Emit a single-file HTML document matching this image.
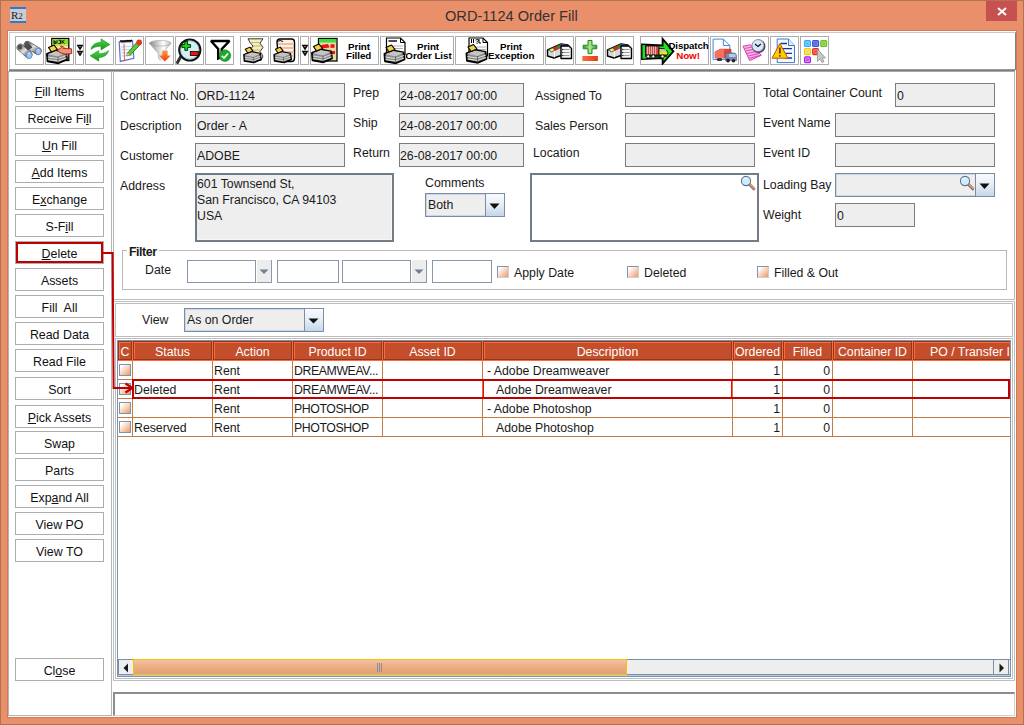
<!DOCTYPE html>
<html><head><meta charset="utf-8">
<style>
*{margin:0;padding:0;box-sizing:border-box}
html,body{width:1024px;height:725px;overflow:hidden}
body{position:relative;background:#E98F69;font-family:"Liberation Sans",sans-serif;font-size:12px;color:#111}
.a{position:absolute}
.t{position:absolute;white-space:pre;line-height:14px;font-size:12.3px;color:#1a1a1a}
.btn{position:absolute;left:15px;width:89px;height:23px;background:#fff;border:1px solid #ADADAD;text-align:center;line-height:25px;font-size:12.4px;color:#111;white-space:pre}
.fld{position:absolute;background:#EEEEEE;border:1px solid #7C7C7C;height:24px}
.tb{position:absolute;top:36px;height:29px;border:1px solid #ADADAD;background:#fff}
u{text-decoration:underline;text-underline-offset:1px}
.cb{position:absolute;width:12px;height:12px;border-top:1px solid #8094AA;border-left:1px solid #8094AA;border-right:1px solid #C8D0DA;border-bottom:1px solid #C8D0DA;background:linear-gradient(135deg,#fff 15%,#EE9A62 100%)}
.hc{position:absolute;top:0;height:19px;background:#C44D2B;border:1px solid #8B3A1F;box-shadow:inset 1px 1px 0 #FF6B3A;color:#fff;text-align:center;line-height:20px;font-size:12.3px;white-space:pre;overflow:hidden}
.tbt{position:absolute;font-weight:bold;font-size:9.8px;letter-spacing:-0.05px;line-height:11px;white-space:pre;text-align:center;color:#000}
</style></head><body>
<!-- window frame -->
<div class="a" style="left:0;top:0;width:1024px;height:725px;border:1px solid #B2714F"></div>
<!-- title icon -->
<div class="a" style="left:10px;top:7px;width:16px;height:16px;background:#C8CCD4;border-top:2px solid #2A7AD0;border-bottom:2px solid #2A7AD0"></div>
<div class="t" style="left:11px;top:8px;font-family:'Liberation Serif';font-size:11px;color:#222">R<span style="font-size:9px">2</span></div>
<div class="t" style="left:445px;top:6px;font-size:14.6px;line-height:20px;color:#333">ORD-1124 Order Fill</div>
<!-- close -->
<div class="a" style="left:986px;top:1px;width:31px;height:20px;background:#C75050"></div>
<svg class="a" style="left:997px;top:7px" width="10" height="9"><path d="M1 1L9 8M9 1L1 8" stroke="#fff" stroke-width="1.9"/></svg>

<!-- client -->
<div class="a" style="left:7px;top:30px;width:1010px;height:688px;background:#D07A55"></div>
<div class="a" style="left:8px;top:31px;width:1008px;height:686px;background:#fff"></div>
<!-- toolbar -->
<div class="a" style="left:9px;top:32px;width:1007px;height:38px;border:1px solid #C8C8C8;border-bottom:none;border-right:1px solid #7E8288"></div>
<div class="a" style="left:9px;top:69px;width:1006px;height:1px;background:#9A9A9A"></div>
<div class="a" style="left:9px;top:70px;width:1006px;height:1px;background:#7A7A7A"></div>
<div class="a" style="left:9px;top:71px;width:1006px;height:1px;background:#A8A8A8"></div>

<!-- TOOLBAR -->
<svg width="0" height="0" style="position:absolute"><defs>
<linearGradient id="gGray" x1="0" y1="0" x2="0" y2="1"><stop offset="0" stop-color="#F0F0F0"/><stop offset="1" stop-color="#8A8A8A"/></linearGradient>
<linearGradient id="gGray2" x1="0" y1="0" x2="1" y2="1"><stop offset="0" stop-color="#9A9A9A"/><stop offset=".5" stop-color="#E8E8E8"/><stop offset="1" stop-color="#6A6A6A"/></linearGradient>
<linearGradient id="gBin" x1="0" y1="0" x2="1" y2="1"><stop offset="0" stop-color="#8A8A8A"/><stop offset=".45" stop-color="#E4E4E4"/><stop offset="1" stop-color="#707070"/></linearGradient>
<linearGradient id="gGreen" x1="0" y1="0" x2="0" y2="1"><stop offset="0" stop-color="#4FD04F"/><stop offset="1" stop-color="#159A15"/></linearGradient>
<linearGradient id="gFun" x1="0" y1="0" x2="1" y2="0"><stop offset="0" stop-color="#888"/><stop offset=".65" stop-color="#FFFFFF"/><stop offset="1" stop-color="#B8B8B8"/></linearGradient>
<linearGradient id="gOr" x1="0" y1="0" x2="0" y2="1"><stop offset="0" stop-color="#F8A040"/><stop offset="1" stop-color="#F03A10"/></linearGradient>
<linearGradient id="gPlus" x1="0" y1="0" x2="1" y2="0"><stop offset="0" stop-color="#2A9A2A"/><stop offset=".5" stop-color="#B0E890"/><stop offset="1" stop-color="#2A9A2A"/></linearGradient>
<linearGradient id="gMin" x1="0" y1="0" x2="1" y2="0"><stop offset="0" stop-color="#F87040"/><stop offset="1" stop-color="#E83A10"/></linearGradient>
<g id="printer">
 <path d="M1.5 17 L10 13.5 L20.5 15.5 L21.5 22.5 L13 26.2 L2 24.2 Z" fill="#8C8C8C" stroke="#000" stroke-width="1.9" stroke-linejoin="round"/>
 <path d="M2 17.2 L10 14 L20.5 15.8 L12.5 19.5 Z" fill="#C4C4C4"/>
 <path d="M2.3 20 L12.5 21.5 L21 18.5 M2.5 22.5 L12.8 24 L21 21" fill="none" stroke="#E8E8E8" stroke-width=".9"/>
 <path d="M12.5 19.5 V25.8" stroke="#555" stroke-width=".8"/>
 <path d="M3 10.5 L8.5 8 L12 12.5 L6 15 Z" fill="#F8D040" stroke="#000" stroke-width="1.2" stroke-linejoin="round"/>
</g>
<g id="boxdoc">
 <path d="M2.5 14 L16 8 L23 9 L23 17 L9 22 L2.5 20 Z" fill="#D8D8D8" stroke="#000" stroke-width="1.4" stroke-linejoin="round"/>
 <path d="M2.5 14 L16 8 L23 9 L9.5 15 Z" fill="#666"/>
 <path d="M4 13.5 L8 11.8 L10 14.5 L6 16 Z" fill="#F0F060" stroke="#222" stroke-width=".6"/>
 <path d="M8.5 11.5 L12 10 L13.5 12.8 L10 14.2 Z" fill="#E02020"/>
 <path d="M12.5 9.8 L15 8.8 L16.5 11 L13.8 12 Z" fill="#10A010"/>
 <path d="M15.5 8.6 L19 8.2 L20.5 10 L17 10.8 Z" fill="#2030E0"/>
 <path d="M9.5 15 V21.5" stroke="#fff" stroke-width=".8"/>
 <path d="M16 10 H24 L26.5 12.5 V22.5 H16 Z" fill="#F4F4F4" stroke="#000" stroke-width="1.4" stroke-linejoin="round"/>
 <path d="M18 13.5 H24.5 M18 16.5 H24.5 M18 19.5 H24.5" stroke="#888" stroke-width=".8"/>
 <circle cx="17.6" cy="13.5" r=".8" fill="#333"/><circle cx="17.6" cy="16.5" r=".8" fill="#333"/><circle cx="17.6" cy="19.5" r=".8" fill="#333"/>
</g>
<g id="dd"><path d="M2 9 H8 L5 14 Z M2 15 H8 L5 20 Z" fill="#000" stroke="#000" stroke-width=".5" stroke-linejoin="round"/><circle cx="5" cy="10.6" r=".7" fill="#ddd"/><circle cx="5" cy="16.6" r=".7" fill="#ddd"/></g>
</defs></svg>
<div class="tb" style="left:15px;width:29px"></div>
<div class="tb" style="left:45px;width:29px"></div>
<div class="tb" style="left:75px;width:9px"></div>
<div class="tb" style="left:85px;width:29px"></div>
<div class="tb" style="left:115px;width:29px"></div>
<div class="tb" style="left:145px;width:29px"></div>
<div class="tb" style="left:175px;width:29px"></div>
<div class="tb" style="left:205px;width:29px"></div>
<div class="tb" style="left:240px;width:29px"></div>
<div class="tb" style="left:270px;width:29px"></div>
<div class="tb" style="left:300px;width:9px"></div>
<div class="tb" style="left:310px;width:69px"></div>
<div class="tb" style="left:380px;width:74px"></div>
<div class="tb" style="left:455px;width:89px"></div>
<div class="tb" style="left:545px;width:29px"></div>
<div class="tb" style="left:575px;width:29px"></div>
<div class="tb" style="left:605px;width:29px"></div>
<div class="tb" style="left:640px;width:69px"></div>
<div class="tb" style="left:710px;width:29px"></div>
<div class="tb" style="left:740px;width:29px"></div>
<div class="tb" style="left:770px;width:29px"></div>
<div class="tb" style="left:800px;width:29px"></div>
<svg class="a" style="left:15px;top:36px" width="29" height="29" viewBox="0 0 29 29">
<path d="M5.5 11.5 L13.5 18.5" stroke="#5A5A5A" stroke-width="7.6" stroke-linecap="round"/>
<path d="M5.5 11.5 L13.5 18.5" stroke="url(#gBin)" stroke-width="6.4" stroke-linecap="round"/>
<path d="M12.5 8.8 L22.8 15" stroke="#5A5A5A" stroke-width="7.6" stroke-linecap="round"/>
<path d="M12.5 8.8 L22.8 15" stroke="url(#gBin)" stroke-width="6.4" stroke-linecap="round"/>
<path d="M9 10 L14 7.5 L17.5 11.5 L13 14.5 Z" fill="#4A4A4A"/>
<ellipse cx="5" cy="11" rx="2.2" ry="2.6" fill="#505050"/>
<ellipse cx="12" cy="8.3" rx="2.2" ry="2.6" fill="#505050"/>
<ellipse cx="14.2" cy="19.2" rx="2.9" ry="3.4" fill="#9CC4F4" stroke="#5A7AB0" stroke-width=".7"/>
<ellipse cx="23.4" cy="15.6" rx="2.7" ry="3.2" fill="#9CC4F4" stroke="#5A7AB0" stroke-width=".7"/>
<path d="M12.8 18 Q13.5 16.8 14.8 17" fill="none" stroke="#fff" stroke-width=".8"/>
<path d="M22 14.5 Q22.7 13.3 24 13.5" fill="none" stroke="#fff" stroke-width=".8"/>
</svg>
<svg class="a" style="left:45px;top:36px" width="29" height="29" viewBox="0 0 29 29">
<rect x="6.8" y="2.5" width="17" height="22" fill="#F8EC98" stroke="#000" stroke-width="1.3"/>
<rect x="7.5" y="3.2" width="15.6" height="5.3" fill="#8CDC30"/>
<path d="M9 4.2 V7.6 H10.8 V5.8 H9 M12 4.2 V7.6 M13.5 4.2 H15.5 V7.6 H13.5 M17 4.2 V7.6 M17 6 L19.5 4.2 M17.5 5.6 L19.5 7.6" fill="none" stroke="#000" stroke-width=".9"/>
<path d="M7.5 9.6 H23" stroke="#D8C860" stroke-width="1"/>
<g transform="translate(0.5,1)"> <path d="M1.5 17 L10 13.5 L20.5 15.5 L21.5 22.5 L13 26.2 L2 24.2 Z" fill="#8C8C8C" stroke="#000" stroke-width="1.9" stroke-linejoin="round"/> <path d="M2 17.2 L10 14 L20.5 15.8 L12.5 19.5 Z" fill="#C4C4C4"/> <path d="M2.3 20 L12.5 21.5 L21 18.5 M2.5 22.5 L12.8 24 L21 21" fill="none" stroke="#E8E8E8" stroke-width=".9"/> <path d="M12.5 19.5 V25.8" stroke="#555" stroke-width=".8"/> <path d="M3 10.5 L8.5 8 L12 12.5 L6 15 Z" fill="#F8D040" stroke="#000" stroke-width="1.2" stroke-linejoin="round"/></g>
<path d="M12.5 14 L16.5 11.5 L19 12.5 L26.5 12.8 L26.8 17.5 L20 18.2 L14.5 16.5 Z" fill="#F4907A" stroke="#9A2010" stroke-width=".9"/>
<path d="M16.5 11.5 Q15 10.5 16 9.8 L19.5 11.5" fill="#F4907A" stroke="#9A2010" stroke-width=".8"/>
</svg>
<svg class="a" style="left:75px;top:36px" width="9" height="29" viewBox="0 0 9 29"><g><path d="M2 9 H8 L5 14 Z M2 15 H8 L5 20 Z" fill="#000" stroke="#000" stroke-width=".5" stroke-linejoin="round"/><circle cx="5" cy="10.6" r=".7" fill="#ddd"/><circle cx="5" cy="16.6" r=".7" fill="#ddd"/></g></svg>
<svg class="a" style="left:85px;top:36px" width="29" height="29" viewBox="0 0 29 29">
<path d="M6 13.5 C6.5 9 11 6.3 16 6.3 L16 2.8 L25 8.5 L16 14 L16 10.3 C12 10.3 8.5 11.5 6 13.5 Z" fill="url(#gGreen)" stroke="#1A8A1A" stroke-width=".5"/>
<path d="M23.5 14.5 C23 19 18.5 21.6 13.8 21.6 L13.8 25.2 L5 19.8 L13.8 14.5 L13.8 17.8 C17.5 17.8 21.3 16.6 23.5 14.5 Z" fill="url(#gGreen)" stroke="#1A8A1A" stroke-width=".5"/>
</svg>
<svg class="a" style="left:115px;top:36px" width="29" height="29" viewBox="0 0 29 29">
<path d="M4.2 6 L17.5 5 L18.9 22.3 L5.3 25.4 Z" fill="#F8FAFF" stroke="#6A6AC8" stroke-width="1.2"/>
<path d="M6 11 L17.6 10.2 M6.3 14 L17.9 13.2 M6.6 17 L18.2 16.2 M6.9 20 L18.5 19.2" stroke="#A8C8F0" stroke-width=".8"/>
<path d="M9 8 L9.6 24.5" stroke="#F05030" stroke-width=".9"/>
<path d="M5 5.8 Q6 3.5 7 5.8 Q8 3.5 9 5.8 Q10 3.5 11 5.6 Q12 3.3 13 5.5 Q14 3.3 15 5.4 Q16 3.2 17 5.3" fill="none" stroke="#000" stroke-width="1.3"/>
<path d="M11.8 19.8 L12.6 17 L22.5 5.5 L25.5 8.2 L15.2 19.2 Z" fill="#5CC83A" stroke="#2A7A1A" stroke-width=".9"/>
<path d="M11.8 19.8 L12.6 17 L15.2 19.2 Z" fill="#E0C090"/>
<circle cx="24.2" cy="6.4" r="2.8" fill="#E83A1A"/>
</svg>
<svg class="a" style="left:145px;top:36px" width="29" height="29" viewBox="0 0 29 29">
<path d="M4.4 7.2 Q9 13 13 17 L13.8 23 Q15 25.5 16.5 23 L17 17 Q22 13 26 7.2 Z" fill="url(#gFun)" stroke="#A8A8A8" stroke-width=".6"/>
<ellipse cx="15.2" cy="7.2" rx="10.8" ry="2.8" fill="url(#gFun)" stroke="#A0A0A0" stroke-width=".6"/>
<path d="M17.3 14.5 H22.6 V19.5 H25.8 L19.9 25.6 L14 19.5 H17.3 Z" fill="url(#gOr)"/>
</svg>
<svg class="a" style="left:175px;top:36px" width="29" height="29" viewBox="0 0 29 29">
<path d="M5.5 21 L2.5 26.5" stroke="#333" stroke-width="3" stroke-linecap="round"/>
<circle cx="14.8" cy="14" r="10.5" fill="#D0F2F6" stroke="#111" stroke-width="2.2"/>
<circle cx="14.8" cy="14" r="9.2" fill="none" stroke="#9AA" stroke-width=".8"/>
<path d="M6.8 8.6 H9.8 V5.6 H12.6 V8.6 H15.6 V11.4 H12.6 V14.4 H9.8 V11.4 H6.8 Z" fill="#10E010" stroke="#000" stroke-width=".8"/>
<rect x="15.3" y="15.5" width="8" height="4" fill="#F01010" stroke="#000" stroke-width=".8"/>
</svg>
<svg class="a" style="left:205px;top:36px" width="29" height="29" viewBox="0 0 29 29">
<path d="M6 5 H24.5 L16.8 13 V21 L13.2 22.5 V13 Z" fill="#fff" stroke="#000" stroke-width="2.4" stroke-linejoin="miter" stroke-miterlimit="2"/>
<circle cx="19.9" cy="19.6" r="5.8" fill="#1EA82A" stroke="#148020" stroke-width=".6"/>
<path d="M16.8 19.8 L19 22 L23 17.5" fill="none" stroke="#fff" stroke-width="1.8"/>
</svg>
<svg class="a" style="left:240px;top:36px" width="29" height="29" viewBox="0 0 29 29">
<path d="M8 2.8 H23 L20 7.2 L23 11.5 L20 15.5 L23 20 L21 24.5 L11 22 L13 18 L10 14 L13 10 L10 6.5 Z" fill="#F4F0B8" stroke="#222" stroke-width=".9"/>
<path d="M10 6.5 H20 M13 10 H23 M10 14 H20 M13 18 H23" stroke="#A8A060" stroke-width=".7"/>
<g transform="translate(2.7,4.3) scale(0.85)"> <path d="M1.5 17 L10 13.5 L20.5 15.5 L21.5 22.5 L13 26.2 L2 24.2 Z" fill="#8C8C8C" stroke="#000" stroke-width="1.9" stroke-linejoin="round"/> <path d="M2 17.2 L10 14 L20.5 15.8 L12.5 19.5 Z" fill="#C4C4C4"/> <path d="M2.3 20 L12.5 21.5 L21 18.5 M2.5 22.5 L12.8 24 L21 21" fill="none" stroke="#E8E8E8" stroke-width=".9"/> <path d="M12.5 19.5 V25.8" stroke="#555" stroke-width=".8"/> <path d="M3 10.5 L8.5 8 L12 12.5 L6 15 Z" fill="#F8D040" stroke="#000" stroke-width="1.2" stroke-linejoin="round"/></g>
</svg>
<svg class="a" style="left:270px;top:36px" width="29" height="29" viewBox="0 0 29 29">
<path d="M7 6 Q7 3 10 3 H21.5 Q24.5 3 24.5 6.5 V22 Q24.5 25.5 21.5 25.5 H12 L8 19 Z" fill="#FAF0E8" stroke="#000" stroke-width="1.4"/>
<path d="M7.5 5.5 Q10 3.5 13 5.5" fill="none" stroke="#000" stroke-width="1"/>
<path d="M8 8 H24 M8.5 12 H24 M9 16 H24 M9.5 20 H24" stroke="#EEC0A0" stroke-width="1.8"/>
<g transform="translate(2.9,4.3) scale(0.85)"> <path d="M1.5 17 L10 13.5 L20.5 15.5 L21.5 22.5 L13 26.2 L2 24.2 Z" fill="#8C8C8C" stroke="#000" stroke-width="1.9" stroke-linejoin="round"/> <path d="M2 17.2 L10 14 L20.5 15.8 L12.5 19.5 Z" fill="#C4C4C4"/> <path d="M2.3 20 L12.5 21.5 L21 18.5 M2.5 22.5 L12.8 24 L21 21" fill="none" stroke="#E8E8E8" stroke-width=".9"/> <path d="M12.5 19.5 V25.8" stroke="#555" stroke-width=".8"/> <path d="M3 10.5 L8.5 8 L12 12.5 L6 15 Z" fill="#F8D040" stroke="#000" stroke-width="1.2" stroke-linejoin="round"/></g>
</svg>
<svg class="a" style="left:300px;top:36px" width="9" height="29" viewBox="0 0 9 29"><g><path d="M2 9 H8 L5 14 Z M2 15 H8 L5 20 Z" fill="#000" stroke="#000" stroke-width=".5" stroke-linejoin="round"/><circle cx="5" cy="10.6" r=".7" fill="#ddd"/><circle cx="5" cy="16.6" r=".7" fill="#ddd"/></g></svg>
<svg class="a" style="left:310px;top:36px" width="69" height="29" viewBox="0 0 69 29">
<rect x="8.5" y="2.5" width="18.5" height="22.5" fill="#E4DCA8" stroke="#000" stroke-width="1.3"/>
<rect x="9" y="3" width="17.2" height="3.5" fill="#3AE03A"/>
<path d="M11 9 L18 8 L19.5 11.5 L12 12.5 Z" fill="#F01010"/>
<rect x="20.5" y="8.3" width="4" height="3.5" fill="#F01010"/>
<rect x="22" y="15" width="3" height="3" fill="#F01010"/>
<g transform="translate(0.5,0)"> <path d="M1.5 17 L10 13.5 L20.5 15.5 L21.5 22.5 L13 26.2 L2 24.2 Z" fill="#8C8C8C" stroke="#000" stroke-width="1.9" stroke-linejoin="round"/> <path d="M2 17.2 L10 14 L20.5 15.8 L12.5 19.5 Z" fill="#C4C4C4"/> <path d="M2.3 20 L12.5 21.5 L21 18.5 M2.5 22.5 L12.8 24 L21 21" fill="none" stroke="#E8E8E8" stroke-width=".9"/> <path d="M12.5 19.5 V25.8" stroke="#555" stroke-width=".8"/> <path d="M3 10.5 L8.5 8 L12 12.5 L6 15 Z" fill="#F8D040" stroke="#000" stroke-width="1.2" stroke-linejoin="round"/></g>
</svg>
<svg class="a" style="left:380px;top:36px" width="74" height="29" viewBox="0 0 74 29">
<path d="M6.5 2 H20.5 L25 6.5 V18.5 H6.5 Z" fill="#fff" stroke="#000" stroke-width="1.2"/>
<path d="M20.5 2 V6.5 H25" fill="none" stroke="#000" stroke-width="1"/>
<path d="M8.5 5 H17" stroke="#000" stroke-width="1.4"/>
<path d="M9 10 H23 M9 12.5 H23" stroke="#999" stroke-width=".8"/>
<g transform="translate(3,1)"> <path d="M1.5 17 L10 13.5 L20.5 15.5 L21.5 22.5 L13 26.2 L2 24.2 Z" fill="#8C8C8C" stroke="#000" stroke-width="1.9" stroke-linejoin="round"/> <path d="M2 17.2 L10 14 L20.5 15.8 L12.5 19.5 Z" fill="#C4C4C4"/> <path d="M2.3 20 L12.5 21.5 L21 18.5 M2.5 22.5 L12.8 24 L21 21" fill="none" stroke="#E8E8E8" stroke-width=".9"/> <path d="M12.5 19.5 V25.8" stroke="#555" stroke-width=".8"/> <path d="M3 10.5 L8.5 8 L12 12.5 L6 15 Z" fill="#F8D040" stroke="#000" stroke-width="1.2" stroke-linejoin="round"/></g>
</svg>
<svg class="a" style="left:455px;top:36px" width="89" height="29" viewBox="0 0 89 29">
<path d="M14 2 H28 L32.5 6.5 V20 H14 Z" fill="#fff" stroke="#000" stroke-width="1.2"/>
<path d="M28 2 V6.5 H32.5" fill="none" stroke="#000" stroke-width="1"/>
<path d="M16.5 3 V7 M18.5 3 V7" stroke="#000" stroke-width="1"/>
<text x="20" y="8.2" font-family="Liberation Sans" font-weight="bold" font-size="7" fill="#000">?</text>
<path d="M24 3 V7 H26" fill="none" stroke="#000" stroke-width="1"/>
<path d="M17 11 H31 M17 13.5 H31" stroke="#999" stroke-width=".8"/>
<g transform="translate(10,0.5)"> <path d="M1.5 17 L10 13.5 L20.5 15.5 L21.5 22.5 L13 26.2 L2 24.2 Z" fill="#8C8C8C" stroke="#000" stroke-width="1.9" stroke-linejoin="round"/> <path d="M2 17.2 L10 14 L20.5 15.8 L12.5 19.5 Z" fill="#C4C4C4"/> <path d="M2.3 20 L12.5 21.5 L21 18.5 M2.5 22.5 L12.8 24 L21 21" fill="none" stroke="#E8E8E8" stroke-width=".9"/> <path d="M12.5 19.5 V25.8" stroke="#555" stroke-width=".8"/> <path d="M3 10.5 L8.5 8 L12 12.5 L6 15 Z" fill="#F8D040" stroke="#000" stroke-width="1.2" stroke-linejoin="round"/></g>
</svg>
<svg class="a" style="left:545px;top:36px" width="29" height="29" viewBox="0 0 29 29"><g> <path d="M2.5 14 L16 8 L23 9 L23 17 L9 22 L2.5 20 Z" fill="#D8D8D8" stroke="#000" stroke-width="1.4" stroke-linejoin="round"/> <path d="M2.5 14 L16 8 L23 9 L9.5 15 Z" fill="#666"/> <path d="M4 13.5 L8 11.8 L10 14.5 L6 16 Z" fill="#F0F060" stroke="#222" stroke-width=".6"/> <path d="M8.5 11.5 L12 10 L13.5 12.8 L10 14.2 Z" fill="#E02020"/> <path d="M12.5 9.8 L15 8.8 L16.5 11 L13.8 12 Z" fill="#10A010"/> <path d="M15.5 8.6 L19 8.2 L20.5 10 L17 10.8 Z" fill="#2030E0"/> <path d="M9.5 15 V21.5" stroke="#fff" stroke-width=".8"/> <path d="M16 10 H24 L26.5 12.5 V22.5 H16 Z" fill="#F4F4F4" stroke="#000" stroke-width="1.4" stroke-linejoin="round"/> <path d="M18 13.5 H24.5 M18 16.5 H24.5 M18 19.5 H24.5" stroke="#888" stroke-width=".8"/> <circle cx="17.6" cy="13.5" r=".8" fill="#333"/><circle cx="17.6" cy="16.5" r=".8" fill="#333"/><circle cx="17.6" cy="19.5" r=".8" fill="#333"/></g></svg>
<svg class="a" style="left:575px;top:36px" width="29" height="29" viewBox="0 0 29 29">
<path d="M13 4.5 H17 V9.2 H21.8 V12.8 H17 V17.6 H13 V12.8 H8.2 V9.2 H13 Z" fill="url(#gPlus)" stroke="#238A23" stroke-width="1"/>
<rect x="7.3" y="20" width="15.6" height="5" fill="url(#gMin)"/>
</svg>
<svg class="a" style="left:605px;top:36px" width="29" height="29" viewBox="0 0 29 29"><g> <path d="M2.5 14 L16 8 L23 9 L23 17 L9 22 L2.5 20 Z" fill="#D8D8D8" stroke="#000" stroke-width="1.4" stroke-linejoin="round"/> <path d="M2.5 14 L16 8 L23 9 L9.5 15 Z" fill="#666"/> <path d="M4 13.5 L8 11.8 L10 14.5 L6 16 Z" fill="#F0F060" stroke="#222" stroke-width=".6"/> <path d="M8.5 11.5 L12 10 L13.5 12.8 L10 14.2 Z" fill="#E02020"/> <path d="M12.5 9.8 L15 8.8 L16.5 11 L13.8 12 Z" fill="#10A010"/> <path d="M15.5 8.6 L19 8.2 L20.5 10 L17 10.8 Z" fill="#2030E0"/> <path d="M9.5 15 V21.5" stroke="#fff" stroke-width=".8"/> <path d="M16 10 H24 L26.5 12.5 V22.5 H16 Z" fill="#F4F4F4" stroke="#000" stroke-width="1.4" stroke-linejoin="round"/> <path d="M18 13.5 H24.5 M18 16.5 H24.5 M18 19.5 H24.5" stroke="#888" stroke-width=".8"/> <circle cx="17.6" cy="13.5" r=".8" fill="#333"/><circle cx="17.6" cy="16.5" r=".8" fill="#333"/><circle cx="17.6" cy="19.5" r=".8" fill="#333"/></g></svg>
<svg class="a" style="left:640px;top:36px" width="69" height="29" viewBox="0 0 69 29">
<path d="M2 8.5 L22.6 9.5 V3 L33.4 15.3 L22.6 27.6 V22 L2 23 Z" fill="#22E022" stroke="#000" stroke-width="1.8" stroke-linejoin="miter"/>
<path d="M2.5 9 L6 9.5 V22.5 L2.5 22.8 Z" fill="#22E022"/>
<rect x="5.5" y="10" width="13.5" height="9" fill="#C85050" stroke="#000" stroke-width=".8"/>
<path d="M7.5 10.5 V18.5 M9.5 10.5 V18.5 M11.5 10.5 V18.5 M13.5 10.5 V18.5 M15.5 10.5 V18.5" stroke="#E8C8C8" stroke-width=".8"/>
<path d="M19 12.5 H24 L28 16 L27.5 19 H19 Z" fill="#F0E020" stroke="#000" stroke-width=".8"/>
<rect x="20.5" y="13.2" width="2.5" height="2" fill="#70D0F0"/><rect x="23.5" y="13.2" width="2.5" height="2" fill="#70D0F0"/>
<path d="M5 20 H27" stroke="#000" stroke-width="1.4"/>
<circle cx="8.2" cy="20.4" r="1.6" fill="#fff" stroke="#000" stroke-width=".8"/><circle cx="13.2" cy="20.4" r="1.6" fill="#fff" stroke="#000" stroke-width=".8"/><circle cx="22.5" cy="20.4" r="1.6" fill="#fff" stroke="#000" stroke-width=".8"/>
</svg>
<svg class="a" style="left:710px;top:36px" width="29" height="29" viewBox="0 0 29 29">
<path d="M3.1 3.1 H13.4 L19.8 9.5 V23.4 H3.1 Z" fill="#fff" stroke="#3A8AE0" stroke-width="1"/>
<path d="M13.4 3.1 V9.5 H19.8" fill="none" stroke="#3A8AE0" stroke-width="1"/>
<path d="M5 16 L10 13.2 H21 V22 H5 Z" fill="#EE4030" stroke="#B02010" stroke-width=".6"/>
<path d="M5 16 L10 13.2 H14 V22 H5 Z" fill="#F87060"/>
<path d="M15.5 17 H24 Q26.5 17 26.5 20 V24.5 H15.5 Z" fill="#8088B0" stroke="#505880" stroke-width=".6"/>
<rect x="19" y="18" width="6.5" height="3" fill="#A8D0F0"/>
<ellipse cx="8.5" cy="23.5" rx="1.8" ry="1.6" fill="#333"/><ellipse cx="10.5" cy="23.5" rx="1.8" ry="1.6" fill="#333"/>
<circle cx="18" cy="24.5" r="1.9" fill="#222"/><circle cx="23.5" cy="24.8" r="1.8" fill="#222"/>
</svg>
<svg class="a" style="left:740px;top:36px" width="29" height="29" viewBox="0 0 29 29">
<path d="M3 10.2 L10.5 8.8 L21.3 19.2 L9.8 24.6 Z" fill="#F8B8E8" stroke="#D040B0" stroke-width="1"/>
<path d="M4.5 12.5 L12 11 M5.8 15 L14.3 13.2 M7 17.5 L16.5 15.5 M8.2 20 L18.8 17.6 M9.4 22.4 L20.5 19.4" stroke="#E050C0" stroke-width="1.2"/>
<circle cx="18.6" cy="10.2" r="6.8" fill="#3A3A4A"/>
<circle cx="18" cy="9.6" r="6" fill="#D8E8F8" stroke="#8A7AA8" stroke-width=".8"/>
<path d="M15 8 L18 10.5 L20.8 8" fill="none" stroke="#111" stroke-width="1.1"/>
</svg>
<svg class="a" style="left:770px;top:36px" width="29" height="29" viewBox="0 0 29 29">
<path d="M7.2 3 H18.5 L24.5 9.5 V26.6 H7.2 Z" fill="#F4F8FF" stroke="#3A7AD0" stroke-width="1"/>
<path d="M18.5 3 V9.5 H24.5" fill="#E0EAF8" stroke="#3A7AD0" stroke-width="1"/>
<path d="M10.5 7.5 H17 M13 12.6 H22 M14 17.3 H22 M15 22 H22" stroke="#1838A0" stroke-width="1.3"/>
<path d="M9.9 7.6 L18 22.2 H2 Z" fill="#F8D000" stroke="#C05000" stroke-width="1" stroke-linejoin="round"/>
<path d="M9.9 11.5 V17.5" stroke="#702000" stroke-width="1.6"/>
<circle cx="9.9" cy="19.8" r=".9" fill="#702000"/>
</svg>
<svg class="a" style="left:800px;top:36px" width="29" height="29" viewBox="0 0 29 29"><rect x="4.6" y="4.6" width="5.8" height="5.8" rx="1" fill="#90D8FF" stroke="#30A8F8" stroke-width="1.3"/><rect x="6.2" y="6.2" width="2.6" height="2.6" fill="#50B8F8"/><rect x="12.7" y="4.6" width="5.8" height="5.8" rx="1" fill="#8090E8" stroke="#3850D8" stroke-width="1.3"/><rect x="14.3" y="6.2" width="2.6" height="2.6" fill="#5068D8"/><rect x="20.8" y="4.6" width="5.8" height="5.8" rx="1" fill="#B0E070" stroke="#68C020" stroke-width="1.3"/><rect x="22.4" y="6.2" width="2.6" height="2.6" fill="#80C840"/><rect x="4.6" y="12.7" width="5.8" height="5.8" rx="1" fill="#FFEC98" stroke="#F8C800" stroke-width="1.3"/><rect x="6.2" y="14.3" width="2.6" height="2.6" fill="#F8D850"/><rect x="12.7" y="12.7" width="5.8" height="5.8" rx="1" fill="#F88070" stroke="#E03020" stroke-width="1.3"/><rect x="14.3" y="14.3" width="2.6" height="2.6" fill="#E85040"/><rect x="4.6" y="20.8" width="5.8" height="5.8" rx="1" fill="#D890F8" stroke="#B020E8" stroke-width="1.3"/><rect x="6.2" y="22.4" width="2.6" height="2.6" fill="#B850F0"/>
<path d="M17.4 13 V25.5 L20 23 L22 26.5 L24 25.5 L22 22 H25.5 Z" fill="#C8C8C8" stroke="#909090" stroke-width=".8"/>
</svg>
<div class="tbt" style="left:347px;top:41px;width:24px">Print</div>
<div class="tbt" style="left:346px;top:50px;width:25px">Filled</div>
<div class="tbt" style="left:417px;top:41px;width:22px">Print</div>
<div class="tbt" style="left:405px;top:50px;width:47px">Order List</div>
<div class="tbt" style="left:500px;top:41px;width:22px">Print</div>
<div class="tbt" style="left:488px;top:50px;width:46px">Exception</div>
<div class="tbt" style="left:668px;top:40px;width:41px;font-size:9.7px;letter-spacing:-0.1px">Dispatch</div>
<div class="tbt" style="left:676px;top:50px;width:24px;color:#F00000">Now!</div>
<!-- /TOOLBAR -->
<!-- left panel -->
<div class="a" style="left:8px;top:71px;width:104px;height:645px;border:1px solid #B4B4B4;border-top:none"></div>
<div class="btn" style="top:79px"><u>F</u>ill Items</div>
<div class="btn" style="top:106px">Receive Fi<u>l</u>l</div>
<div class="btn" style="top:133px"><u>U</u>n Fill</div>
<div class="btn" style="top:160px"><u>A</u>dd Items</div>
<div class="btn" style="top:187px">E<u>x</u>change</div>
<div class="btn" style="top:214px">S-F<u>i</u>ll</div>
<div class="btn" style="top:241px"><u>D</u>elete</div>
<div class="btn" style="top:268px">Assets</div>
<div class="btn" style="top:295px">Fill  All</div>
<div class="btn" style="top:322px">Read Data</div>
<div class="btn" style="top:349px">Read File</div>
<div class="btn" style="top:377px">Sort</div>
<div class="btn" style="top:405px"><u>P</u>ick Assets</div>
<div class="btn" style="top:431px">Swap</div>
<div class="btn" style="top:458px">Parts</div>
<div class="btn" style="top:485px">Exp<u>a</u>nd All</div>
<div class="btn" style="top:512px">View PO</div>
<div class="btn" style="top:539px">View TO</div>
<div class="btn" style="top:658px">Cl<u>o</u>se</div>

<!-- main panel -->
<div class="a" style="left:113px;top:71px;width:902px;height:229px;border-left:1px solid #B4B4B4;border-right:1px solid #B4B4B4"></div>


<div class="t" style="left:120px;top:89px">Contract No.</div>
<div class="t" style="left:120px;top:119px">Description</div>
<div class="t" style="left:120px;top:149px">Customer</div>
<div class="t" style="left:120px;top:179px">Address</div>
<div class="fld" style="left:195px;top:83px;width:150px"></div>
<div class="t" style="left:197px;top:89px">ORD-1124</div>
<div class="fld" style="left:195px;top:113px;width:150px"></div>
<div class="t" style="left:197px;top:119px">Order - A</div>
<div class="fld" style="left:195px;top:143px;width:150px"></div>
<div class="t" style="left:197px;top:149px">ADOBE</div>
<div class="a" style="left:195px;top:173px;width:199px;height:69px;background:#EEEEEE;border:2px solid #6C7C8C;border-right-width:1px;border-bottom-width:1px;box-shadow:inset -1px -1px 0 #7C7C7C,inset -2px -2px 0 #F6F6F6"></div>
<div class="t" style="left:197px;top:176px;line-height:16px">601 Townsend St,
San Francisco, CA 94103
USA</div>

<div class="t" style="left:353px;top:86px">Prep</div>
<div class="t" style="left:353px;top:116px">Ship</div>
<div class="t" style="left:353px;top:146px">Return</div>
<div class="fld" style="left:399px;top:83px;width:125px"></div>
<div class="t" style="left:400px;top:89px">24-08-2017 00:00</div>
<div class="fld" style="left:399px;top:113px;width:125px"></div>
<div class="t" style="left:400px;top:119px">24-08-2017 00:00</div>
<div class="fld" style="left:399px;top:143px;width:125px"></div>
<div class="t" style="left:400px;top:149px">26-08-2017 00:00</div>

<div class="t" style="left:425px;top:176px">Comments</div>
<div class="a" style="left:425px;top:193px;width:80px;height:24px;background:#EEEEEE;border:1px solid #7A8CA4;box-shadow:inset 0 0 0 1px #C8D8E8"></div>
<div class="a" style="left:485px;top:194px;width:19px;height:22px;background:linear-gradient(#F8FAFD,#E8EFF7 45%,#C4D6EA);border-left:1px solid #7A8CA4"></div>
<svg class="a" style="left:489px;top:203px" width="11" height="7"><path d="M0.5 0.5H10.5L5.5 6z" fill="#111"/></svg>
<div class="t" style="left:428px;top:198px">Both</div>

<div class="t" style="left:535px;top:89px">Assigned To</div>
<div class="t" style="left:535px;top:119px">Sales Person</div>
<div class="t" style="left:533px;top:146px">Location</div>
<div class="fld" style="left:625px;top:83px;width:130px"></div>
<div class="fld" style="left:625px;top:113px;width:130px"></div>
<div class="fld" style="left:625px;top:143px;width:130px"></div>
<div class="a" style="left:530px;top:173px;width:229px;height:69px;background:#fff;border:2px solid #6C7C8C;border-right-width:1px;border-bottom-width:1px;box-shadow:inset -1px -1px 0 #7C7C7C"></div>

<div class="t" style="left:763px;top:86px">Total Container Count</div>
<div class="t" style="left:763px;top:116px">Event Name</div>
<div class="t" style="left:763px;top:146px">Event ID</div>
<div class="t" style="left:763px;top:178px">Loading Bay</div>
<div class="t" style="left:763px;top:208px">Weight</div>
<div class="fld" style="left:895px;top:83px;width:100px"></div>
<div class="t" style="left:897px;top:89px">0</div>
<div class="fld" style="left:835px;top:113px;width:160px"></div>
<div class="fld" style="left:835px;top:143px;width:160px"></div>
<div class="a" style="left:835px;top:173px;width:160px;height:24px;background:#EEEEEE;border:1px solid #7A8CA4;box-shadow:inset 0 0 0 1px #C8D8E8"></div>
<div class="a" style="left:975px;top:174px;width:19px;height:22px;background:linear-gradient(#F8FAFD,#E8EFF7 45%,#C4D6EA);border-left:1px solid #7A8CA4"></div>
<svg class="a" style="left:979px;top:183px" width="11" height="7"><path d="M0.5 0.5H10.5L5.5 6z" fill="#111"/></svg>
<div class="fld" style="left:835px;top:203px;width:80px"></div>
<div class="t" style="left:837px;top:209px">0</div>


<svg class="a" style="left:740px;top:175px" width="16" height="16" viewBox="0 0 16 16"><path d="M8.8 8.8 L13.8 13.8" stroke="#7A6A9A" stroke-width="3" stroke-linecap="round"/><path d="M9.3 8.6 L14 13.3" stroke="#F0A030" stroke-width="1.6" stroke-linecap="round"/><circle cx="6" cy="6" r="4.6" fill="#C8F0FA" stroke="#6A6A90" stroke-width="1.1"/><path d="M3.5 5 Q4.5 3 7 3" fill="none" stroke="#fff" stroke-width="1"/></svg>
<svg class="a" style="left:959px;top:175px" width="16" height="16" viewBox="0 0 16 16"><path d="M8.8 8.8 L13.8 13.8" stroke="#7A6A9A" stroke-width="3" stroke-linecap="round"/><path d="M9.3 8.6 L14 13.3" stroke="#F0A030" stroke-width="1.6" stroke-linecap="round"/><circle cx="6" cy="6" r="4.6" fill="#C8F0FA" stroke="#6A6A90" stroke-width="1.1"/><path d="M3.5 5 Q4.5 3 7 3" fill="none" stroke="#fff" stroke-width="1"/></svg>
<!-- FORMEND -->
<!-- filter group -->
<div class="a" style="left:122px;top:250px;width:885px;height:40px;border:1px solid #B9B9B9"></div>
<div class="t" style="left:127px;top:244.5px;padding:0 2px;background:#fff;font-weight:bold;font-size:12.4px;letter-spacing:-0.45px">Filter</div>
<div class="t" style="left:145px;top:263px">Date</div>
<div class="a" style="left:187px;top:260px;width:69px;height:23px;border:1px solid #8598AE;background:#fff"></div>
<div class="a" style="left:256px;top:260px;width:16px;height:23px;background:#EDEDED;border-right:1px solid #8A9BB0;border-bottom:1px solid #8A9BB0;border-left:1px solid #fff"></div>
<svg class="a" style="left:259px;top:269px" width="10" height="6"><path d="M0.5 0.5H9.5L5 5z" fill="#6F8094"/></svg>
<div class="a" style="left:277px;top:260px;width:62px;height:23px;border:1px solid #8598AE;background:#fff"></div>
<div class="a" style="left:342px;top:260px;width:69px;height:23px;border:1px solid #8598AE;background:#fff"></div>
<div class="a" style="left:411px;top:260px;width:16px;height:23px;background:#EDEDED;border-right:1px solid #8A9BB0;border-bottom:1px solid #8A9BB0;border-left:1px solid #fff"></div>
<svg class="a" style="left:414px;top:269px" width="10" height="6"><path d="M0.5 0.5H9.5L5 5z" fill="#6F8094"/></svg>
<div class="a" style="left:432px;top:260px;width:60px;height:23px;border:1px solid #8598AE;background:#fff"></div>
<div class="cb" style="left:497px;top:266px"></div>
<div class="t" style="left:514px;top:266px">Apply Date</div>
<div class="cb" style="left:627px;top:266px"></div>
<div class="t" style="left:644px;top:266px">Deleted</div>
<div class="cb" style="left:757px;top:266px"></div>
<div class="t" style="left:774px;top:266px">Filled &amp; Out</div>
<!-- main panel bottom lines -->
<div class="a" style="left:113px;top:299px;width:902px;height:1px;background:#BDBDBD"></div>
<div class="a" style="left:113px;top:301px;width:902px;height:380px;border:1px solid #BDBDBD"></div>
<!-- view panel -->
<div class="a" style="left:115px;top:303px;width:898px;height:34px;border:1px solid #BDBDBD"></div>
<div class="a" style="left:115px;top:338px;width:898px;height:341px;border:1px solid #BDBDBD"></div>
<div class="t" style="left:142px;top:313px">View</div>
<div class="a" style="left:184px;top:308px;width:140px;height:24px;background:#EEEEEE;border:1px solid #7A8EA6;box-shadow:inset 0 0 0 1px #C8D8E8"></div>
<div class="a" style="left:304px;top:309px;width:19px;height:22px;background:linear-gradient(#F8FAFD,#E8EFF7 45%,#C4D6EA);border-left:1px solid #7A8EA6"></div>
<svg class="a" style="left:308px;top:318px" width="11" height="6"><path d="M0.5 0.5H10.5L5.5 5.5z" fill="#111"/></svg>
<div class="t" style="left:187px;top:313px">As on Order</div>
<div class="a" style="left:117px;top:340px;width:894px;height:337px;border:1px solid #7D93AB;border-right-color:#7D93AB;background:#fff;overflow:hidden">
<div class="a" style="left:0;top:0;width:900px;height:20px;background:#FF6A3A"></div>
<div class="hc" style="left:0px;width:14px">C</div>
<div class="hc" style="left:15px;width:79px">Status</div>
<div class="hc" style="left:95px;width:79px">Action</div>
<div class="hc" style="left:175px;width:89px">Product ID</div>
<div class="hc" style="left:265px;width:99px">Asset ID</div>
<div class="hc" style="left:365px;width:249px">Description</div>
<div class="hc" style="left:615px;width:49px">Ordered</div>
<div class="hc" style="left:665px;width:49px">Filled</div>
<div class="hc" style="left:715px;width:79px">Container ID</div>
<div class="hc" style="left:795px;width:123px">PO / Transfer ID</div>
<div class="a" style="left:0;top:38px;width:900px;height:1px;background:#C27B45"></div>
<div class="cb" style="left:1px;top:23px;border-color:#7E92A8"></div>
<div class="t" style="left:16px;top:23px"></div>
<div class="t" style="left:96px;top:23px">Rent</div>
<div class="t" style="left:176px;top:23px;letter-spacing:-0.4px">DREAMWEAV...</div>
<div class="t" style="left:369px;top:23px">- Adobe Dreamweaver</div>
<div class="t" style="left:615px;top:23px;width:47px;text-align:right">1</div>
<div class="t" style="left:665px;top:23px;width:47px;text-align:right">0</div>
<div class="a" style="left:0;top:57px;width:900px;height:1px;background:#C27B45"></div>
<div class="cb" style="left:1px;top:42px;border-color:#7E92A8"></div>
<div class="t" style="left:16px;top:42px">Deleted</div>
<div class="t" style="left:96px;top:42px">Rent</div>
<div class="t" style="left:176px;top:42px;letter-spacing:-0.4px">DREAMWEAV...</div>
<div class="t" style="left:378px;top:42px">Adobe Dreamweaver</div>
<div class="t" style="left:615px;top:42px;width:47px;text-align:right">1</div>
<div class="t" style="left:665px;top:42px;width:47px;text-align:right">0</div>
<div class="a" style="left:0;top:76px;width:900px;height:1px;background:#C27B45"></div>
<div class="cb" style="left:1px;top:61px;border-color:#7E92A8"></div>
<div class="t" style="left:16px;top:61px"></div>
<div class="t" style="left:96px;top:61px">Rent</div>
<div class="t" style="left:176px;top:61px;letter-spacing:-0.4px">PHOTOSHOP</div>
<div class="t" style="left:369px;top:61px">- Adobe Photoshop</div>
<div class="t" style="left:615px;top:61px;width:47px;text-align:right">1</div>
<div class="t" style="left:665px;top:61px;width:47px;text-align:right">0</div>
<div class="a" style="left:0;top:95px;width:900px;height:1px;background:#C27B45"></div>
<div class="cb" style="left:1px;top:80px;border-color:#7E92A8"></div>
<div class="t" style="left:16px;top:80px">Reserved</div>
<div class="t" style="left:96px;top:80px">Rent</div>
<div class="t" style="left:176px;top:80px;letter-spacing:-0.4px">PHOTOSHOP</div>
<div class="t" style="left:378px;top:80px">Adobe Photoshop</div>
<div class="t" style="left:615px;top:80px;width:47px;text-align:right">1</div>
<div class="t" style="left:665px;top:80px;width:47px;text-align:right">0</div>
<div class="a" style="left:14px;top:20px;width:1px;height:76px;background:#C27B45"></div>
<div class="a" style="left:94px;top:20px;width:1px;height:76px;background:#C27B45"></div>
<div class="a" style="left:174px;top:20px;width:1px;height:76px;background:#C27B45"></div>
<div class="a" style="left:264px;top:20px;width:1px;height:76px;background:#C27B45"></div>
<div class="a" style="left:364px;top:20px;width:1px;height:76px;background:#C27B45"></div>
<div class="a" style="left:614px;top:20px;width:1px;height:76px;background:#C27B45"></div>
<div class="a" style="left:664px;top:20px;width:1px;height:76px;background:#C27B45"></div>
<div class="a" style="left:714px;top:20px;width:1px;height:76px;background:#C27B45"></div>
<div class="a" style="left:794px;top:20px;width:1px;height:76px;background:#C27B45"></div>
</div>
<div class="a" style="left:483px;top:380px;width:249px;height:18px;border:1px solid #FF0000"></div>
<div class="a" style="left:132px;top:379px;width:878px;height:20px;border:2px solid #C00000"></div>

<!-- scrollbar -->
<div class="a" style="left:118px;top:659px;width:892px;height:16px;background:#EEEEEE;border-top:1px solid #7A90A8;border-bottom:1px solid #7A90A8"></div>
<div class="a" style="left:118px;top:675px;width:892px;height:1px;background:#B8CCE0"></div>
<div class="a" style="left:118px;top:659px;width:1px;height:16px;background:#7A90A8"></div>
<svg class="a" style="left:123px;top:663px" width="6" height="10"><path d="M5 0.5V9.5L0.5 5z" fill="#1A1A1A"/></svg>
<div class="a" style="left:133px;top:659px;width:494px;height:16px;border:1px solid #F8C000;background:linear-gradient(#F2C2A0,#EDB088 40%,#E6A070)"></div>
<div class="a" style="left:377px;top:663px;width:1px;height:9px;background:#8C8CA0"></div>
<div class="a" style="left:379px;top:663px;width:1px;height:9px;background:#8C8CA0"></div>
<div class="a" style="left:381px;top:663px;width:1px;height:9px;background:#8C8CA0"></div>
<div class="a" style="left:993px;top:660px;width:16px;height:14px;background:#EEEEEE;border-left:1px solid #7A90A8;border-right:1px solid #7A90A8"></div>
<svg class="a" style="left:999px;top:663px" width="6" height="10"><path d="M0.5 0.5V9.5L5 5z" fill="#1A1A1A"/></svg>
<!-- status field -->
<div class="a" style="left:113px;top:692px;width:902px;height:24px;border-top:2px solid #8C8C8C;border-left:2px solid #8C8C8C;border-right:1px solid #D0D0D0;border-bottom:1px solid #D0D0D0;background:#fff"></div>
<!-- red annotation -->
<div class="a" style="left:16px;top:242px;width:87px;height:21px;border:2px solid #C00000"></div>
<svg class="a" style="left:100px;top:245px" width="40" height="155" viewBox="100 245 40 155"><path d="M103 253 H112.6 L113.6 388 H131" fill="none" stroke="#C00000" stroke-width="2"/></svg>
<svg class="a" style="left:122px;top:381px" width="12" height="14"><path d="M3.5 2.5L10.5 7L3.5 11.5" fill="none" stroke="#C00000" stroke-width="2.2"/></svg>

<!-- END -->


</body></html>
